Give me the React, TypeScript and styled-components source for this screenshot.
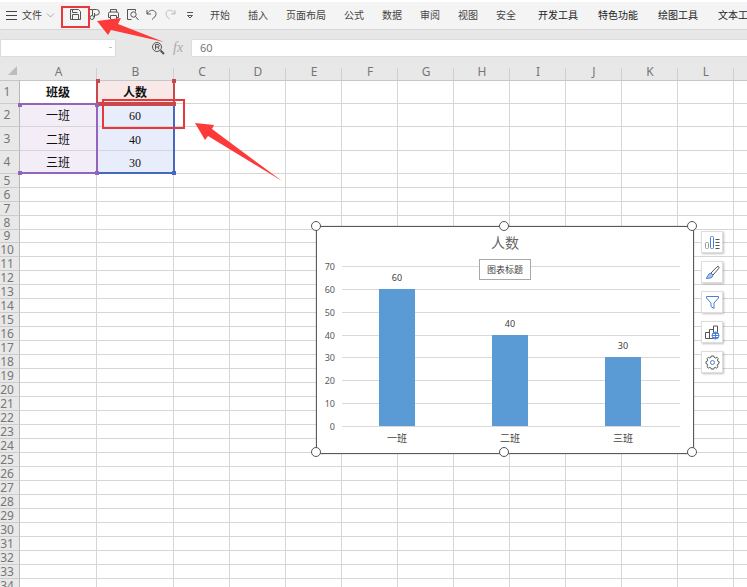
import React from "react";
import styled, { createGlobalStyle, css } from "styled-components";

const GlobalStyle = createGlobalStyle`
  * { box-sizing: border-box; }
  body { margin: 0; overflow: hidden; background: #e7e7e7; }
  button { font: inherit; color: inherit; border: 0; background: none; padding: 0; margin: 0; }
  svg { display: block; }
`;

const ui = `"Noto Sans", "Noto Sans CJK SC", sans-serif`;

const Page = styled.div`
  position: relative;
  height: 100vh;
  overflow: hidden;
  display: flex;
  flex-direction: column;
  font: 10px/14px ${ui};
  color: #444;
`;

const Ribbon = styled.header`
  flex: none;
  display: flex;
  align-items: center;
  height: 30px;
  padding: 0 0 2px 6px;
  border-top: 2px solid #fff;
  border-bottom: 1px solid #d6d6d6;
  background: #f4f4f4;
  white-space: nowrap;
  overflow: hidden;
`;

const FileMenu = styled.button`
  flex: none;
  display: flex;
  align-items: center;
  gap: 4px;
  width: 62px;
`;

const QuickTools = styled.div`
  flex: none;
  display: flex;
  align-items: center;
  gap: 4px;
  width: 142px;
`;

const QuickButton = styled.button<{ $faded?: boolean }>`
  width: 15px;
  height: 16px;
  display: grid;
  place-items: center;
  color: ${(p) => (p.$faded ? "#bdbdbd" : "#555")};
`;

const Tabs = styled.nav<{ $context?: boolean }>`
  flex: none;
  display: flex;
  gap: ${(p) => (p.$context ? 20 : 18)}px;
  margin-right: 22px;
  color: ${(p) => (p.$context ? "#222" : "#444")};
`;

const Tab = styled.button`
  white-space: nowrap;
`;

const FormulaBar = styled.div`
  flex: none;
  display: flex;
  align-items: center;
  height: 34px;
  padding-top: 1px;
  background: #e7e7e7;
`;

const NameBox = styled.select`
  flex: none;
  width: 116px;
  height: 18px;
  border: 1px solid #dcdcdc;
  border-radius: 2px;
  appearance: none;
  background: #fff
    linear-gradient(#c0c0c0, #c0c0c0) no-repeat right 3px center / 3px 1px;
  font: 11px/14px ${ui};
`;

const FormulaTools = styled.div`
  flex: none;
  display: flex;
  align-items: center;
  gap: 8px;
  width: 75px;
  padding-left: 34px;
`;

const FxButton = styled.button`
  font: italic 14px/16px "Liberation Serif", serif;
  color: #aaa;
`;

const FormulaInput = styled.input`
  flex: 1;
  min-width: 0;
  height: 18px;
  padding: 0 8px;
  border: 1px solid #dcdcdc;
  border-right: 0;
  border-radius: 2px 0 0 2px;
  background: #fff;
  color: #777;
  font: 11px/14px ${ui};
`;

const Sheet = styled.main`
  position: relative;
  flex: 1;
  min-height: 0;
  overflow: hidden;
  background: #fff;
`;

const Grid = styled.table`
  width: 100%;
  table-layout: fixed;
  border-collapse: separate;
  border-spacing: 0;
`;

const Col = styled.col<{ $w?: number }>`
  width: ${(p) => (p.$w ? `${p.$w}px` : "auto")};
`;

const Row = styled.tr<{ $h: number }>`
  height: ${(p) => p.$h}px;
`;

const headText = css`
  padding: 0;
  font: 12px/12px "Noto Sans", sans-serif;
  color: #777;
  background-color: #e8e8e8;
`;

const ColumnHead = styled.th`
  ${headText}
  border-bottom: 1px solid #c6c6c6;
  background-image: linear-gradient(#cfcfcf, #cfcfcf);
  background-repeat: no-repeat;
  background-position: right bottom;
  background-size: 1px 12px;
  &:last-child { background-image: none; }
`;

const Corner = styled.td`
  padding: 0 3px 3px 0;
  background: #e8e8e8;
  border-bottom: 1px solid #c6c6c6;
  svg { margin-left: auto; }
`;

const RowHead = styled.th`
  ${headText}
  padding-right: 5px;
  border-right: 1px solid #b8b8b8;
  border-bottom: 1px solid #cccccc;
`;

const tints = { title: "#f8e8e7", category: "#f3edf8", value: "#e8edfb" };

const Cell = styled.td<{ $tint?: keyof typeof tints; $bold?: boolean }>`
  padding: ${(p) => (p.$tint || p.$bold ? 2 : 0)}px 0 0;
  border-right: 1px solid #d6d6d6;
  border-bottom: 1px solid #d6d6d6;
  background: ${(p) => (p.$tint ? tints[p.$tint] : "#fff")};
  text-align: center;
  font: ${(p) => (p.$bold ? 700 : 400)} 12px/12px "Liberation Serif", "Noto Sans CJK SC", serif;
  color: #111;
  &:last-child { border-right: 0; }
`;

const Range = styled.div<{ $x: number; $y: number; $w: number; $h: number; $color: string; $open?: boolean }>`
  position: absolute;
  left: ${(p) => p.$x}px;
  top: ${(p) => p.$y}px;
  width: ${(p) => p.$w}px;
  height: ${(p) => p.$h}px;
  color: ${(p) => p.$color};
  border: 2px solid currentColor;
  border-top-width: ${(p) => (p.$open ? 0 : 2)}px;
  border-left-width: ${(p) => (p.$open ? 2 : 0)}px;
  pointer-events: none;
`;

const Knob = styled.i<{ $right?: boolean; $bottom?: boolean }>`
  position: absolute;
  width: 4px;
  height: 4px;
  background: currentColor;
  ${(p) => (p.$right ? "right: -3px;" : "left: -2px;")}
  ${(p) => (p.$bottom ? "bottom: -3px;" : "top: -2px;")}
`;

const ChartFrame = styled.section`
  position: absolute;
  left: 316px;
  top: 162px;
  width: 378px;
  height: 228px;
  border: 1px solid #5a5a5a;
  background: #fff;
  box-shadow: 0 0 1px #888;
`;

const Plot = styled.svg`
  width: 375px;
  height: 226px;
  font-family: ${ui};
  font-size: 9px;
`;

const ResizeHandle = styled.i<{ $x: string; $y: string }>`
  position: absolute;
  left: ${(p) => p.$x};
  top: ${(p) => p.$y};
  width: 10px;
  height: 10px;
  margin: -6px;
  border: 1px solid #555;
  border-radius: 50%;
  background: #fff;
`;

const Tooltip = styled.div`
  position: absolute;
  left: 50%;
  top: 32px;
  transform: translateX(-50%);
  width: 52px;
  border: 1px solid #a8a8a8;
  background: #fff;
  font: 9px/19px ${ui};
  text-align: center;
  white-space: nowrap;
  color: #444;
`;

const ChartTools = styled.div`
  position: absolute;
  left: 701px;
  top: 167px;
  display: flex;
  flex-direction: column;
  gap: 8px;
`;

const ChartTool = styled.button`
  display: grid;
  place-items: center;
  width: 22px;
  height: 22px;
  background: #fff;
  border: 1px solid #dedede;
  box-shadow: 1px 1px 2px rgba(0, 0, 0, 0.25);
`;

const MarkBox = styled.div<{ $x: number; $y: number; $w: number; $h: number }>`
  position: absolute;
  left: ${(p) => p.$x}px;
  top: ${(p) => p.$y}px;
  width: ${(p) => p.$w}px;
  height: ${(p) => p.$h}px;
  border: 2px solid #e8383b;
  pointer-events: none;
`;

const MarkArrow = styled.svg<{ $x: number; $y: number }>`
  position: absolute;
  left: ${(p) => p.$x}px;
  top: ${(p) => p.$y}px;
  fill: #fb3a39;
  pointer-events: none;
`;

const Icon = ({ w = 13, h = 13, children }: { w?: number; h?: number; children: React.ReactNode }) => (
  <svg width={w} height={h} viewBox={`0 0 ${w} ${h}`} fill="none" stroke="currentColor" strokeWidth="1" aria-hidden="true">
    {children}
  </svg>
);

const quick: { label: string; faded?: boolean; art: React.ReactNode }[] = [
  { label: "保存", art: <><path d="M1.5 11.5v-10h8l2 2v8z" /><path d="M3.5 1.5v3h5M3.5 11.5v-5h6v5" /></> },
  { label: "输出", art: <><path d="M4.5 7V1.5h4a2.800 2.800 0 0 1 0 5.600H6.500M1.500 1.500h3" /><circle cx="4" cy="9.500" r="2" /><path d="M6.500 5v4.500" /></> },
  { label: "打印", art: <><path d="M3.5 4V1.500h6V4M3.500 9.500h-2v-4a1.500 1.500 0 0 1 1.500-1.500h7a1.500 1.500 0 0 1 1.500 1.500v4h-2" /><path d="M3.500 7.500h6v4h-6z" /></> },
  { label: "打印预览", art: <><path d="M5.500 11.500h-4v-10h8v2" /><circle cx="7.500" cy="6.500" r="2.700" /><path d="M9.500 8.500l3 3.500" /></> },
  { label: "撤销", art: <path d="M2 2v4h4M2 6C4 2.500 7 1.500 9.500 3c2.500 2 2 5-2.500 8.500" /> },
  { label: "恢复", faded: true, art: <path d="M11 2v4H7M11 6C9 2.500 6 1.500 3.500 3c-2.500 2-2 5 2.500 8.500" /> },
  { label: "更多", art: <path d="M4 4.500h6M4.500 7.500h5l-2.500 2.500z" /> },
];

const mainTabs = ["开始", "插入", "页面布局", "公式", "数据", "审阅", "视图", "安全"];
const contextTabs = ["开发工具", "特色功能", "绘图工具", "文本工具"];

const letters = "ABCDEFGHIJKL".split("");
const tallRows = [23, 23, 24, 23];
const rowHeight = (n: number) => tallRows[n - 1] ?? (n === 9 ? 12 : 14);
const data: [string, string][] = [["班级", "人数"], ["一班", "60"], ["二班", "40"], ["三班", "30"]];

const blue = "#4a7fd6";
const toolIcons: { label: string; art: React.ReactNode }[] = [
  { label: "图表元素", art: <><rect x="0.500" y="7.500" width="3" height="6" rx="1" stroke="#999" /><rect x="5.500" y="1.500" width="3" height="12" rx="1" stroke={blue} /><path d="M10.500 4.500h4M10.500 7.500h4M10.500 10.500h4M10.500 13.500h4" stroke="#555" /></> },
  { label: "图表样式", art: <><path d="M6 8l6-6.200q1.500-.8 2 .2.300.800-.5 1.700L8 10z" stroke="#555" /><path d="M1 13.300q1.500-.8 2-3 1-2 3-2l2 1.800q0 2-2 2.700-2.500.900-5 .5z" fill="#a9c4f2" stroke={blue} /></> },
  { label: "图表筛选", art: <path d="M1.500 1.500h12v1.500l-4.500 5v5.500l-3-2V8l-4.500-5z" stroke={blue} /> },
  { label: "在线图表", art: <><path d="M.5 13.500v-6h4v6zM4.500 13.500v-9h4v9zM8.500 13v-12h4v7" stroke="#555" /><circle cx="10.500" cy="10.500" r="3.500" fill="#fff" stroke={blue} /><path d="M7 10.500h7M10.500 7v7M8 8.500h5M8 12.500h5" stroke={blue} /></> },
  { label: "设置", art: <><path d="M6.200 1h2.600l.5 1.500 1.100.5 1.500-.8 1.300 1.500-.8 1.500.4 1 1.200.4v2l-1.200.5-.5 1.200.7 1.500-1.500 1.300-1.300-.7-1 .4-.5 1.300H6.300l-.5-1.300-1-.4-1.400.7L2 11.800l.7-1.500-.5-1.200L1 8.600v-2l1.200-.4.5-1L2 3.700l1.400-1.500 1.400.8 1-.5z" stroke="#555" /><circle cx="7.500" cy="7.500" r="2" stroke={blue} /></> },
];

const bars = [
  { name: "一班", value: 60 },
  { name: "二班", value: 40 },
  { name: "三班", value: 30 },
];

const BASE = 199;
const TOP = 39;
const yOf = (v: number) => Math.round(BASE - (v / 70) * (BASE - TOP));

function Chart() {
  return (
    <ChartFrame aria-label="人数">
      <Plot viewBox="0 0 375 226">
        <text x="188" y="21" textAnchor="middle" fontSize="14" fill="#666">人数</text>
        {[0, 10, 20, 30, 40, 50, 60, 70].map((v) => (
          <g key={v}>
            <path d={`M25 ${yOf(v) + 0.5}H363`} stroke="#d9d9d9" />
            <text x="18" y={yOf(v) + 4} textAnchor="end" fill="#595959">{v}</text>
          </g>
        ))}
        {bars.map((b, i) => {
          const cx = 80 + i * 113;
          return (
            <g key={b.name}>
              <rect x={cx - 18} y={yOf(b.value)} width="36" height={BASE - yOf(b.value)} fill="#5b9bd5" />
              <text x={cx} y={yOf(b.value) - 8} textAnchor="middle" fill="#404040">{b.value}</text>
              <text x={cx} y="215" textAnchor="middle" fontSize="10" fill="#444">{b.name}</text>
            </g>
          );
        })}
      </Plot>
      <Tooltip role="tooltip">图表标题</Tooltip>
      {["0%", "50%", "100%"].map((x) => (
        <React.Fragment key={x}>
          <ResizeHandle $x={x} $y="0%" />
          <ResizeHandle $x={x} $y="100%" />
        </React.Fragment>
      ))}
    </ChartFrame>
  );
}

function Cells() {
  return (
    <Grid>
      <colgroup>
        <Col $w={20} />
        <Col $w={77} />
        <Col $w={77} />
        {letters.slice(2).map((l) => <Col key={l} $w={56} />)}
        <Col />
      </colgroup>
      <thead>
        <Row $h={17}>
          <Corner>
            <svg width="9" height="9" viewBox="0 0 9 9" aria-hidden="true"><path d="M9 0v9H0z" fill="#bcbcbc" /></svg>
          </Corner>
          {letters.map((l) => <ColumnHead key={l} scope="col">{l}</ColumnHead>)}
          <ColumnHead />
        </Row>
      </thead>
      <tbody>
        {Array.from({ length: 34 }, (_, i) => i + 1).map((n) => (
          <Row key={n} $h={rowHeight(n)}>
            <RowHead scope="row">{n}</RowHead>
            {[...letters, "M"].map((l, c) => {
              const text = data[n - 1]?.[c];
              const tint = !text ? undefined : n === 1 ? (c === 1 ? "title" : undefined) : c === 0 ? "category" : "value";
              return <Cell key={l} $tint={tint} $bold={n === 1}>{text}</Cell>;
            })}
          </Row>
        ))}
      </tbody>
    </Grid>
  );
}

export default function App() {
  return (
    <Page>
      <GlobalStyle />
      <Ribbon>
        <FileMenu>
          <Icon w={12} h={12}><path d="M0 2.500h11M0 6.500h11M0 10.500h11" /></Icon>
          文件
          <Icon w={9} h={8}><path d="M1 2.500l3.500 3.500L8 2.500" stroke="#aaa" /></Icon>
        </FileMenu>
        <QuickTools>
          {quick.map((q) => (
            <QuickButton key={q.label} aria-label={q.label} $faded={q.faded}>
              <Icon>{q.art}</Icon>
            </QuickButton>
          ))}
        </QuickTools>
        <Tabs>{mainTabs.map((t) => <Tab key={t}>{t}</Tab>)}</Tabs>
        <Tabs $context>{contextTabs.map((t) => <Tab key={t}>{t}</Tab>)}</Tabs>
      </Ribbon>
      <FormulaBar>
        <NameBox aria-label="名称框" defaultValue=""><option value="" /></NameBox>
        <FormulaTools>
          <QuickButton aria-label="查找">
            <Icon w={14} h={14}><circle cx="6" cy="6" r="4.500" /><path d="M9.500 9.500l3.500 3.500" strokeWidth="2" /><path d="M4.500 8.500v-5H7a1.200 1.200 0 0 1 0 2.500H4.500M7 6l1 2.500" /></Icon>
          </QuickButton>
          <FxButton>fx</FxButton>
        </FormulaTools>
        <FormulaInput aria-label="编辑栏" defaultValue="60" />
      </FormulaBar>
      <Sheet>
        <Cells />
        <Range $x={96} $y={17} $w={79} $h={23} $color="#c8494b" $open><Knob /><Knob $right /></Range>
        <Range $x={97} $y={39} $w={78} $h={71} $color="#4668c0"><Knob $right $bottom /></Range>
        <Range $x={96} $y={38} $w={79} $h={2} $color="#c8494b"><Knob $right /></Range>
        <Range $x={20} $y={39} $w={78} $h={71} $color="#9464bd">
          <Knob /><Knob $right /><Knob $bottom /><Knob $right $bottom />
        </Range>
        <Chart />
        <ChartTools>
          {toolIcons.map((t) => (
            <ChartTool key={t.label} aria-label={t.label}><Icon w={15} h={15}>{t.art}</Icon></ChartTool>
          ))}
        </ChartTools>
      </Sheet>
      <MarkBox $x={61} $y={6} $w={29} $h={22} />
      <MarkArrow $x={97} $y={18} width="68" height="25" viewBox="0 0 68 25">
        <path d="M0 3L24 0 21 6 67 24 14 12 11 17z" />
      </MarkArrow>
      <MarkBox $x={102} $y={99} $w={83} $h={30} />
      <MarkArrow $x={195} $y={123} width="88" height="59" viewBox="0 0 88 59">
        <path d="M0 0L19 2 17 6 87 58 13 13 10 17z" />
      </MarkArrow>
    </Page>
  );
}
